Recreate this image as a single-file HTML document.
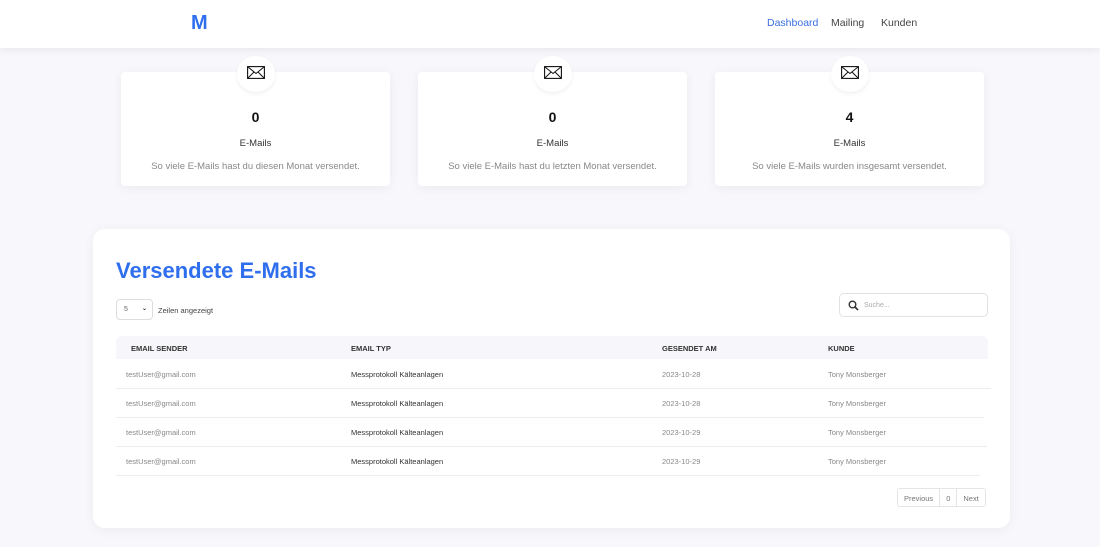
<!DOCTYPE html>
<html><head><meta charset="utf-8"><style>
*{box-sizing:border-box;margin:0;padding:0}
body{width:1100px;height:547px;background:#f8f8fc;font-family:"Liberation Sans",sans-serif;position:relative;overflow:hidden;color:#333}
.hdr{position:absolute;left:0;top:0;width:1100px;height:48px;background:#fff;box-shadow:0 2px 8px rgba(0,0,0,.07)}
.logo{position:absolute;left:191px;top:12px;font-weight:bold;font-size:20px;color:#2f6fed}
.nav{position:absolute;top:17px;font-size:10.5px;color:#444}
.card{position:absolute;top:72px;width:269px;height:114px;background:#fff;border-radius:4px;box-shadow:0 2px 10px rgba(0,0,0,.06);text-align:center}
.circ{position:absolute;left:116px;top:-16px;width:38px;height:36px;border-radius:50%;background:#fff;box-shadow:0 2px 4px rgba(0,0,0,.06)}
.circ svg{position:absolute;left:10px;top:10px}
.num{position:absolute;width:100%;top:37px;font-size:14px;font-weight:bold;color:#111}
.lbl{position:absolute;width:100%;top:66px;font-size:9.5px;color:#333}
.desc{position:absolute;width:100%;top:89px;font-size:9.5px;color:#888}
.panel{position:absolute;left:93px;top:229px;width:917px;height:299px;background:#fff;border-radius:12px;box-shadow:0 2px 12px rgba(0,0,0,.05)}
.title{position:absolute;left:116px;top:258px;font-size:22px;font-weight:bold;color:#2f6fed}
.sel{position:absolute;left:116px;top:299px;width:37px;height:21px;border:1px solid #ddd;border-radius:4px;font-size:7px;color:#666;padding:6px 0 0 7px}
.sel b{position:absolute;right:5px;top:5px;font-size:6px;color:#333}
.zl{position:absolute;left:158px;top:306px;font-size:7.5px;color:#444}
.search{position:absolute;left:839px;top:293px;width:149px;height:24px;border:1px solid #e2e2e2;border-radius:5px}
.search span{position:absolute;left:24px;top:8px;font-size:7px;color:#aaa}
.th{position:absolute;left:116px;top:336px;width:872px;height:23px;background:#f7f7fb;border-radius:6px 6px 0 0}
.c{position:absolute;font-size:7.5px}
.h{font-weight:bold;color:#333;top:344px}
.line{position:absolute;left:116px;height:1px;background:#ececf0}
.pg{position:absolute;left:897px;top:488px;height:19px;border:1px solid #e5e5e5;border-radius:3px;display:flex;font-size:7.5px;color:#777}
.pg div{padding:5px 6px 0;border-right:1px solid #e5e5e5}
.pg div:last-child{border:none}
</style></head><body>
<div class="hdr"><div class="logo">M</div>
<div class="nav" style="left:767px;color:#3a6ee0">Dashboard</div>
<div class="nav" style="left:831px">Mailing</div>
<div class="nav" style="left:881px">Kunden</div></div>

<div class="card" style="left:121px"><div class="circ"><svg width="18" height="13" viewBox="0 0 18 13"><rect x=".6" y=".6" width="16.8" height="11.8" fill="none" stroke="#111" stroke-width="1.1"/><path d="M.6 .6L9 7.5 17.4.6M.6 12.4L7 6M17.4 12.4L11 6" fill="none" stroke="#111" stroke-width="1"/></svg></div><div class="num">0</div><div class="lbl">E-Mails</div><div class="desc">So viele E-Mails hast du diesen Monat versendet.</div></div>
<div class="card" style="left:418px"><div class="circ"><svg width="18" height="13" viewBox="0 0 18 13"><rect x=".6" y=".6" width="16.8" height="11.8" fill="none" stroke="#111" stroke-width="1.1"/><path d="M.6 .6L9 7.5 17.4.6M.6 12.4L7 6M17.4 12.4L11 6" fill="none" stroke="#111" stroke-width="1"/></svg></div><div class="num">0</div><div class="lbl">E-Mails</div><div class="desc">So viele E-Mails hast du letzten Monat versendet.</div></div>
<div class="card" style="left:715px"><div class="circ"><svg width="18" height="13" viewBox="0 0 18 13"><rect x=".6" y=".6" width="16.8" height="11.8" fill="none" stroke="#111" stroke-width="1.1"/><path d="M.6 .6L9 7.5 17.4.6M.6 12.4L7 6M17.4 12.4L11 6" fill="none" stroke="#111" stroke-width="1"/></svg></div><div class="num">4</div><div class="lbl">E-Mails</div><div class="desc">So viele E-Mails wurden insgesamt versendet.</div></div>

<div class="panel"></div>
<div class="title">Versendete E-Mails</div>
<div class="sel">5<b>&#8964;</b></div>
<div class="zl">Zeilen angezeigt</div>
<div class="search"><svg style="position:absolute;left:8px;top:6px" width="11" height="11" viewBox="0 0 11 11"><circle cx="4.5" cy="4.5" r="3.3" fill="none" stroke="#333" stroke-width="1.4"/><path d="M7 7L10 10" stroke="#333" stroke-width="1.6"/></svg><span>Suche...</span></div>
<div class="th"></div>
<div class="c h" style="left:131px">EMAIL SENDER</div>
<div class="c h" style="left:351px">EMAIL TYP</div>
<div class="c h" style="left:662px">GESENDET AM</div>
<div class="c h" style="left:828px">KUNDE</div>

<div class="c" style="left:126px;top:370px;color:#888">testUser@gmail.com</div><div class="c" style="left:351px;top:370px;color:#333">Messprotokoll Kälteanlagen</div><div class="c" style="left:662px;top:370px;color:#888">2023-10-28</div><div class="c" style="left:828px;top:370px;color:#888">Tony Monsberger</div>
<div class="line" style="top:388px;width:875px"></div>
<div class="c" style="left:126px;top:399px;color:#888">testUser@gmail.com</div><div class="c" style="left:351px;top:399px;color:#333">Messprotokoll Kälteanlagen</div><div class="c" style="left:662px;top:399px;color:#888">2023-10-28</div><div class="c" style="left:828px;top:399px;color:#888">Tony Monsberger</div>
<div class="line" style="top:417px;width:868px"></div>
<div class="c" style="left:126px;top:428px;color:#888">testUser@gmail.com</div><div class="c" style="left:351px;top:428px;color:#333">Messprotokoll Kälteanlagen</div><div class="c" style="left:662px;top:428px;color:#888">2023-10-29</div><div class="c" style="left:828px;top:428px;color:#888">Tony Monsberger</div>
<div class="line" style="top:446px;width:871px"></div>
<div class="c" style="left:126px;top:457px;color:#888">testUser@gmail.com</div><div class="c" style="left:351px;top:457px;color:#333">Messprotokoll Kälteanlagen</div><div class="c" style="left:662px;top:457px;color:#888">2023-10-29</div><div class="c" style="left:828px;top:457px;color:#888">Tony Monsberger</div>
<div class="line" style="top:475px;width:864px"></div>

<div class="pg"><div>Previous</div><div>0</div><div>Next</div></div>
</body></html>
